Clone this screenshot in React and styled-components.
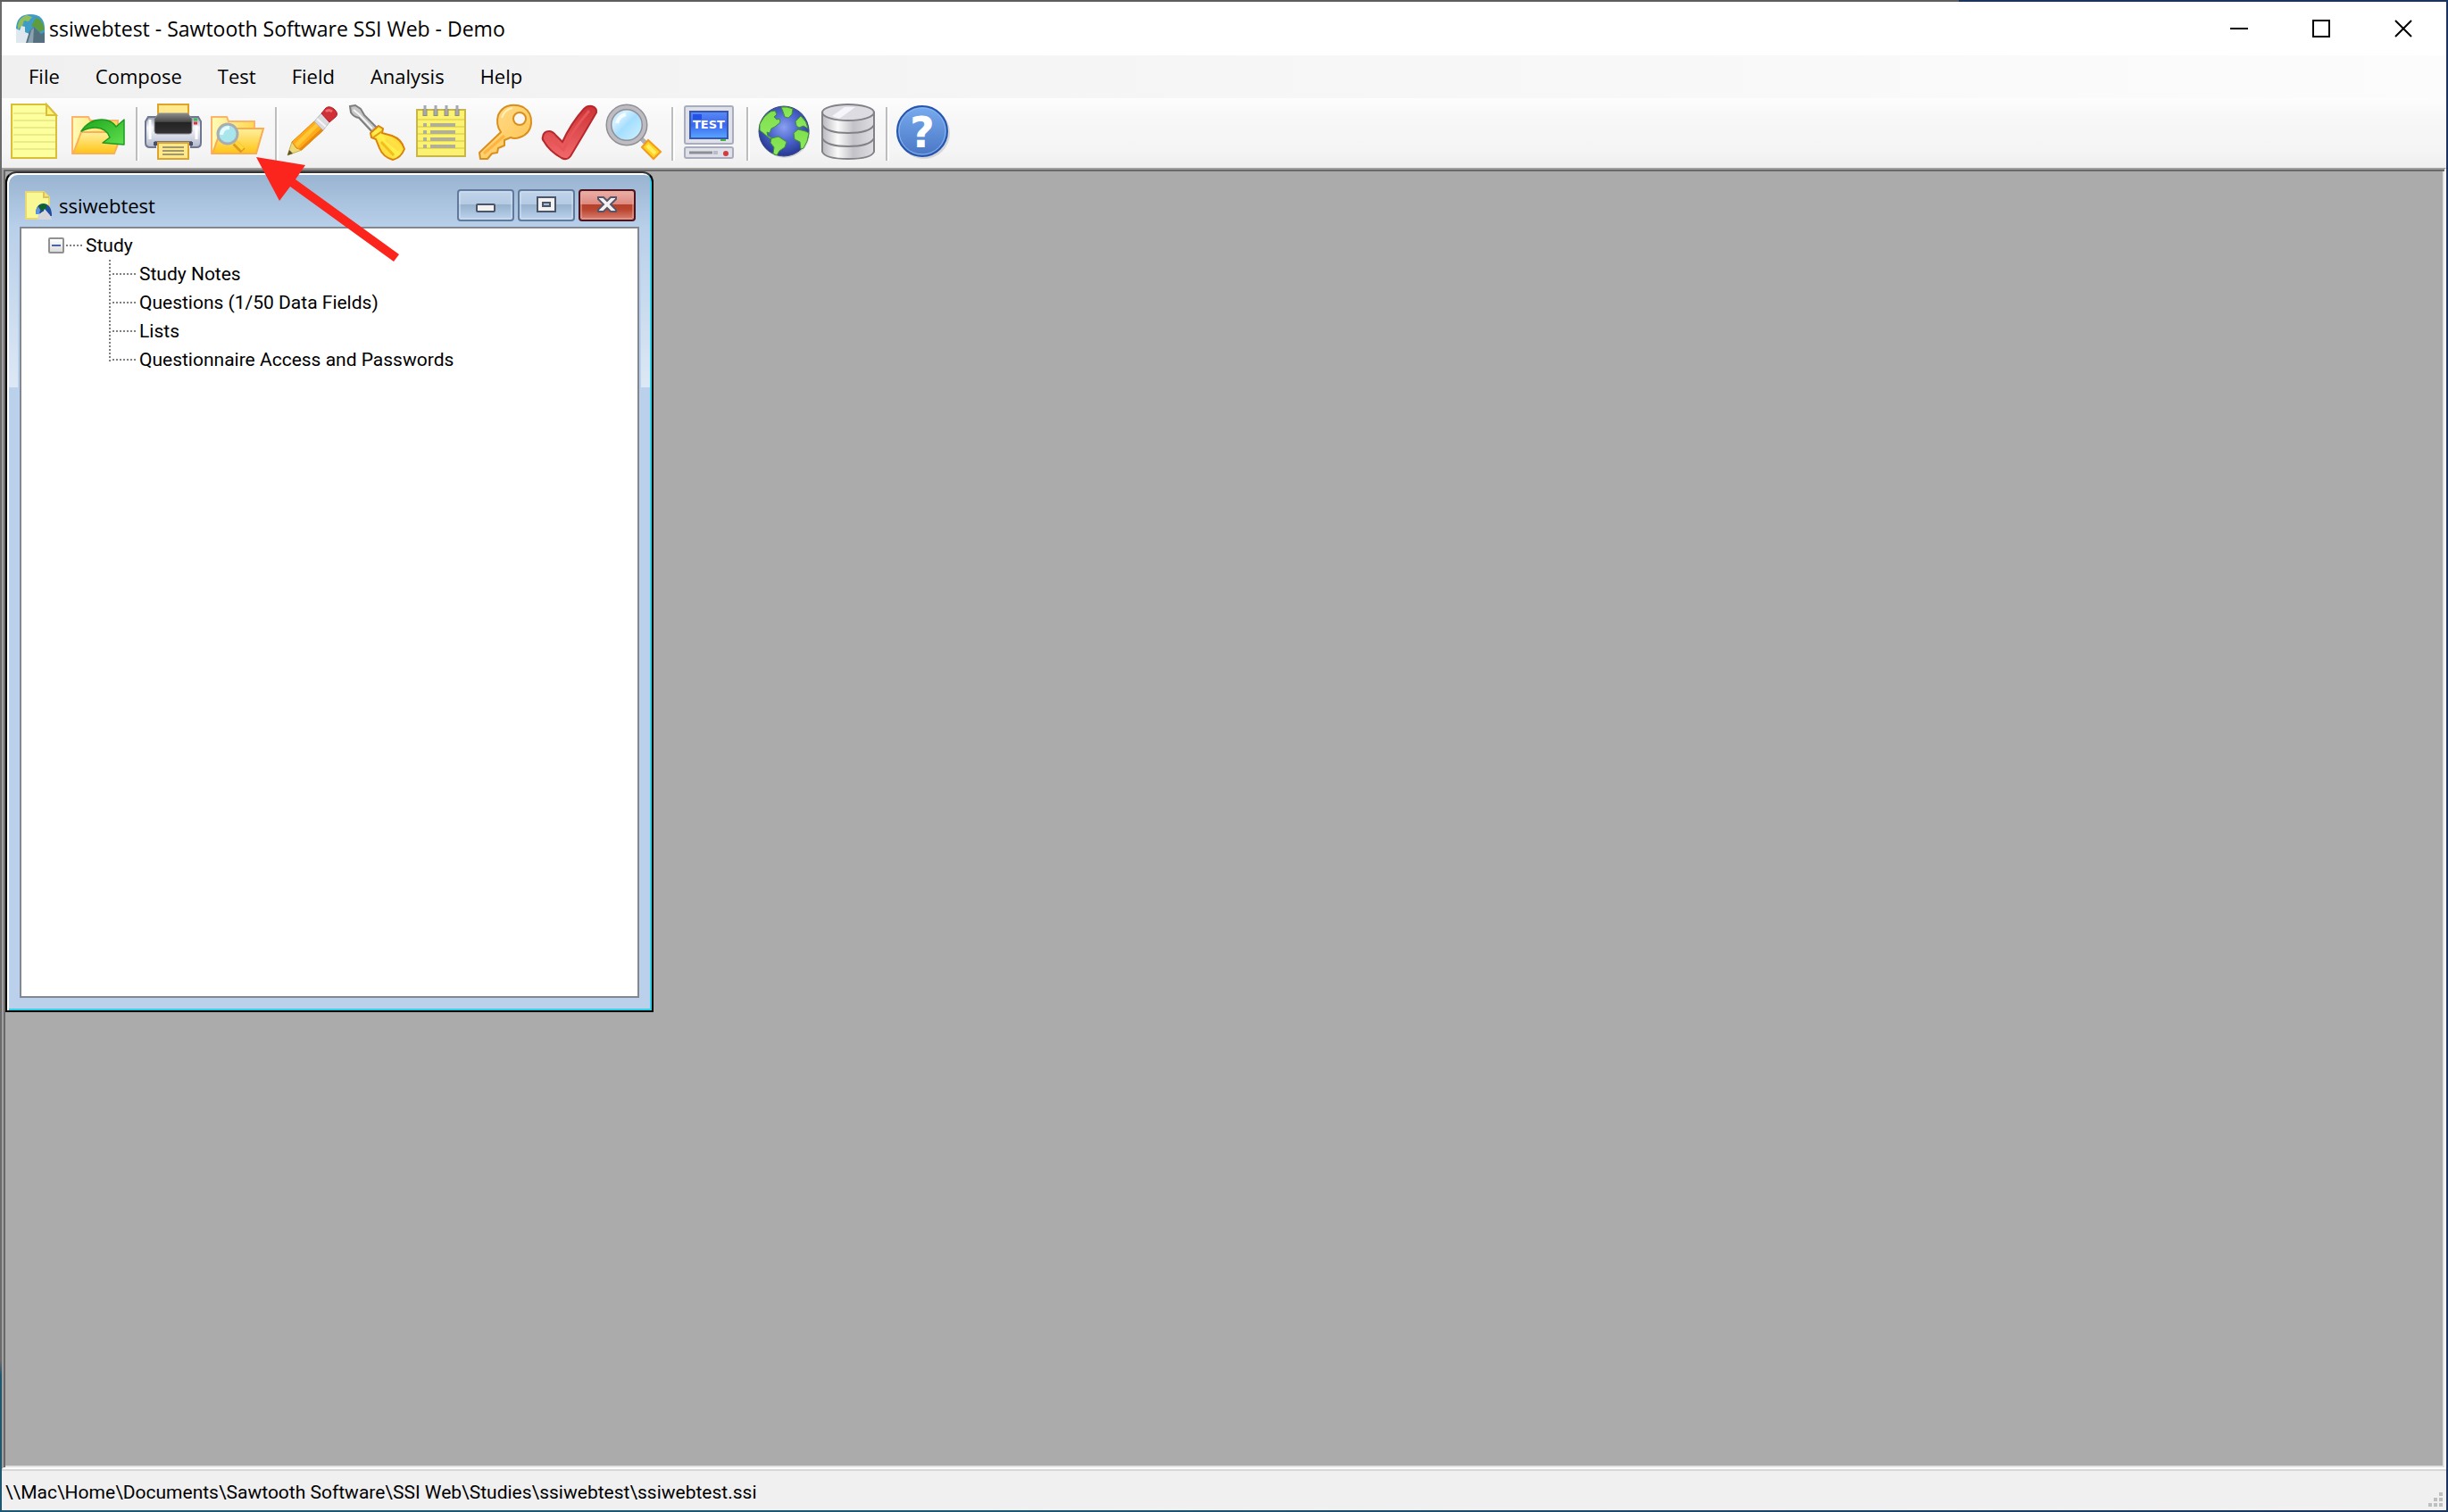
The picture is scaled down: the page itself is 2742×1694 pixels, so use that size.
import React from "react";
import styled, { createGlobalStyle, css } from "styled-components";

const Global = createGlobalStyle`
  * { box-sizing: border-box; }
  body { margin: 0; }
  button { border: 0; padding: 0; margin: 0; background: none; font: inherit; color: inherit; }
`;

/* ---------- toolbar drawings ---------- */

const Svg = ({ children, label }) => (
  <Drawing width="64" height="64" viewBox="0 0 64 64" role="img" aria-label={label}>{children}</Drawing>
);

const Gradients = () => (
  <DefsSvg width="0" height="0" aria-hidden="true">
    <defs>
      <linearGradient id="folder" x1="0" y1="0" x2="0" y2="1">
        <stop offset="0" stopColor="#fff0a0" /><stop offset="1" stopColor="#ffc415" />
      </linearGradient>
      <linearGradient id="folderBack" x1="0" y1="0" x2="1" y2="0">
        <stop offset="0" stopColor="#fffbb8" /><stop offset="1" stopColor="#ffd84c" />
      </linearGradient>
      <linearGradient id="arrow" x1="0" y1="0" x2="1" y2="1">
        <stop offset="0" stopColor="#1fa51d" /><stop offset="1" stopColor="#5fe04f" />
      </linearGradient>
      <linearGradient id="printer" x1="0" y1="0" x2="0" y2="1">
        <stop offset="0" stopColor="#9aa0b4" /><stop offset=".35" stopColor="#f4f6fb" /><stop offset="1" stopColor="#b4b9cc" />
      </linearGradient>
      <linearGradient id="dark" x1="0" y1="0" x2="0" y2="1">
        <stop offset="0" stopColor="#8c8c8c" /><stop offset=".4" stopColor="#4a4a4a" /><stop offset=".45" stopColor="#242424" /><stop offset="1" stopColor="#333" />
      </linearGradient>
      <linearGradient id="glass" x1="0" y1="0" x2="1" y2="1">
        <stop offset="0" stopColor="#a5dcff" /><stop offset=".3" stopColor="#d4f0ff" /><stop offset=".5" stopColor="#a4deff" /><stop offset="1" stopColor="#d8f6ff" />
      </linearGradient>
      <linearGradient id="screen" x1="0" y1="0" x2="0" y2="1">
        <stop offset="0" stopColor="#5a8af4" /><stop offset=".5" stopColor="#3b67f0" /><stop offset="1" stopColor="#5aa8ff" />
      </linearGradient>
      <linearGradient id="handle" x1="0" y1="1" x2="1" y2="0">
        <stop offset="0" stopColor="#ffb92a" /><stop offset=".5" stopColor="#fff04a" /><stop offset="1" stopColor="#ffae1a" />
      </linearGradient>
      <linearGradient id="key" x1="0" y1="0" x2="1" y2="1">
        <stop offset="0" stopColor="#ffdf94" /><stop offset="1" stopColor="#ffc24a" />
      </linearGradient>
      <linearGradient id="check" x1="0" y1="0" x2="0" y2="1">
        <stop offset="0" stopColor="#cc3336" /><stop offset="1" stopColor="#f2696b" />
      </linearGradient>
      <linearGradient id="metal" x1="0" y1="0" x2="1" y2="0">
        <stop offset="0" stopColor="#b8b8be" /><stop offset=".3" stopColor="#fafafa" /><stop offset=".6" stopColor="#c2c2c8" /><stop offset="1" stopColor="#dedee2" />
      </linearGradient>
      <linearGradient id="help" x1="0" y1="0" x2="0" y2="1">
        <stop offset="0" stopColor="#78abef" /><stop offset="1" stopColor="#4a76c4" />
      </linearGradient>
      <radialGradient id="ocean" cx=".5" cy=".42" r=".55">
        <stop offset="0" stopColor="#8aa0f0" /><stop offset=".5" stopColor="#4f68d0" /><stop offset="1" stopColor="#2b3c98" />
      </radialGradient>
      <linearGradient id="land" x1="0" y1="0" x2="0" y2="1">
        <stop offset="0" stopColor="#7fe04c" /><stop offset="1" stopColor="#8fe860" />
      </linearGradient>
    </defs>
  </DefsSvg>
);

const NewIcon = () => (
  <Svg label="New">
    <path d="M7 1H46L57 13V61H7Z" fill="#fdff9e" stroke="#d9bf35" strokeWidth="2" />
    {[10, 18, 26, 34, 42, 50].map((y) => (
      <path key={y} d={`M9 ${y + 1}H56`} stroke="#ecec86" strokeWidth="2" />
    ))}
    <path d="M46 1V13H57Z" fill="#fff27c" stroke="#d9bf35" strokeWidth="2" />
  </Svg>
);

const OpenIcon = () => (
  <Svg label="Open">
    <path d="M3 56V15H21L23 19H54V31L48 56Z" fill="url(#folderBack)" stroke="#fbb469" strokeWidth="2" />
    <path d="M13 32H59L50 56H4Z" fill="url(#folder)" stroke="#fbb056" strokeWidth="2" />
    <path d="M13 31C19 22 27 18 36 18C43 18 48 20 52 26L61 18V46L37 44L45 38C42 30 36 27 29 27C23 27 17 29 13 31Z" fill="url(#arrow)" stroke="#1c9a20" strokeWidth="1.5" strokeLinejoin="round" />
  </Svg>
);

const PrintIcon = () => (
  <Svg label="Print">
    <rect x="15" y="1" width="34" height="16" fill="#ffe98c" stroke="#dca42c" strokeWidth="2" />
    <path d="M4 15H60L63 20V44Q63 49 58 49H52V43H12V49H6Q1 49 1 44V20Z" fill="url(#printer)" stroke="#6f7790" strokeWidth="2" />
    <path d="M6 18V40M58 25V40" stroke="#fff" strokeWidth="3" />
    <path d="M16 11H48L53 17V31Q53 34 50 34H14Q11 34 11 31V17Z" fill="url(#dark)" stroke="#8a8a90" strokeWidth="1" />
    <path d="M10 43H54V47H10Z" fill="#4a5068" />
    <rect x="15" y="44" width="34" height="18" fill="#ffe98c" stroke="#dca42c" strokeWidth="2" />
    <path d="M20 49H44M20 53H44M20 57H44" stroke="#a09868" strokeWidth="2" />
    <path d="M55 18H59" stroke="#31c24b" strokeWidth="3" />
    <path d="M55 22H59" stroke="#e0303c" strokeWidth="3" />
  </Svg>
);

const FindFolderIcon = () => (
  <Svg label="Browse">
    <path d="M3 56V15H20L22 20H51V30L46 56Z" fill="url(#folderBack)" stroke="#fbb469" strokeWidth="2" />
    <path d="M14 28H61L53 56H4Z" fill="url(#folder)" stroke="#fbac50" strokeWidth="2" />
    <path d="M29 44L38 53" stroke="#e09a1c" strokeWidth="7" />
    <path d="M30 43L38 51" stroke="#ffd53c" strokeWidth="4" />
    <circle cx="21" cy="34" r="11" fill="#a9e6ec" stroke="#a8adb4" strokeWidth="3" />
    <path d="M14 35Q15 27 23 27" stroke="#e6fbff" strokeWidth="4" fill="none" />
  </Svg>
);

const PencilIcon = () => (
  <Svg label="Edit">
    <path d="M4 58L9 43L20 52Z" fill="#ecd97c" stroke="#c9ae48" />
    <path d="M4 58L6 52L10 56Z" fill="#5a5238" />
    <path d="M9 43L34 20L44 30L20 52L14 50Z" fill="#ffab19" stroke="#e08d12" />
    <path d="M12 45L36 22L39 25L15 49Z" fill="#ffc735" />
    <path d="M17 51L42 28L44 30L20 52Z" fill="#e88a10" />
    <path d="M34 20L42 11L51 21L44 30Z" fill="#dadade" stroke="#b4b4b8" />
    <path d="M37 17L47 26" stroke="#f6f6f6" strokeWidth="2" />
    <path d="M42 11L47 5Q51 2 56 6Q62 11 58 15L51 21Z" fill="#cf2f36" stroke="#b52229" />
    <path d="M47 9Q50 6 54 9" stroke="#ee6b70" strokeWidth="3" fill="none" />
  </Svg>
);

const ScrewdriverIcon = () => (
  <Svg label="Settings">
    <path d="M2 3L8 2L14 6Q17 11 18 13L32 27L27 32L12 16Q6 15 3 10Z" fill="#c6c6c6" stroke="#7d7d7d" strokeWidth="2" />
    <path d="M6 7L12 12L27 28" stroke="#f4f4f4" strokeWidth="2" fill="none" />
    <path d="M34 25L39 28L38 33L49 36Q60 40 63 51Q59 61 50 63Q39 60 35 50L31 40L26 38L25 33Z" fill="url(#handle)" stroke="#d9820c" strokeWidth="2" strokeLinejoin="round" />
    <path d="M28 38L38 31" stroke="#e39a14" strokeWidth="2" />
    <path d="M37 43L51 58" stroke="#f5bd1c" strokeWidth="3" />
    <path d="M42 40L57 52" stroke="#ffdd44" strokeWidth="4" />
  </Svg>
);

const NotepadIcon = () => (
  <Svg label="Notes">
    <rect x="5" y="7" width="54" height="52" fill="#fbf272" stroke="#c8b648" strokeWidth="2" />
    {[18, 26, 34, 42, 50].map((y) => (
      <path key={y} d={`M6 ${y}H58`} stroke="#ebdc58" strokeWidth="2" />
    ))}
    {[14, 26, 38, 50].map((x) => (
      <g key={x}>
        <path d={`M${x} 6V14`} stroke="#8f8f70" strokeWidth="5" />
        <path d={`M${x} 2V13`} stroke="#a8a8b0" strokeWidth="3" />
      </g>
    ))}
    {[24, 32, 40, 48].map((y) => (
      <path key={y} d={`M12 ${y}H16M20 ${y}H48`} stroke="#b2b093" strokeWidth="4" />
    ))}
  </Svg>
);

const KeyIcon = () => (
  <Svg label="Access">
    <path fillRule="evenodd" d="M34 3Q43 0 52 4Q62 10 61 22Q60 34 48 38Q42 40 38 38L31 41V47L24 50L23 55L17 56L12 62L4 62L3 55L27 32Q21 24 24 13Q28 5 34 3ZM48 10A7 7 0 1 0 48 24A7 7 0 1 0 48 10Z" fill="url(#key)" stroke="#d98f1d" strokeWidth="2" strokeLinejoin="round" />
    <path d="M8 56L31 36" stroke="#ffb340" strokeWidth="3" />
    <path d="M28 16Q31 7 40 5" stroke="#fff0bd" strokeWidth="2" fill="none" />
  </Svg>
);

const CheckIcon = () => (
  <Svg label="Check">
    <path d="M2 37Q3 31 9 31Q13 31 17 36L24 43Q33 23 48 6Q52 2 57 3Q63 5 62 10Q48 34 33 59Q29 64 23 61Q9 53 3 42Q1 40 2 37Z" fill="url(#check)" stroke="#b7282c" strokeWidth="2" />
    <path d="M6 36Q14 41 25 52Q35 30 54 8" stroke="#e85558" strokeWidth="3" fill="none" />
  </Svg>
);

const SearchIcon = () => (
  <Svg label="Search">
    <path d="M38 37L46 45" stroke="#b0b0b4" strokeWidth="5" />
    <path d="M48 41L62 54L54 62L41 49Z" fill="#ffd326" stroke="#f39a1b" strokeWidth="2" />
    <path d="M47 47L56 56" stroke="#fff05c" strokeWidth="4" />
    <circle cx="24" cy="24" r="20" fill="url(#glass)" stroke="#909094" strokeWidth="7" />
    <circle cx="24" cy="24" r="20" fill="none" stroke="#bcbcc2" strokeWidth="4" />
    <path d="M13 22Q15 14 23 12" stroke="#f4fcff" strokeWidth="4" fill="none" />
  </Svg>
);

const TestIcon = () => (
  <Svg label="Test">
    <rect x="5" y="3" width="54" height="42" rx="2" fill="#dfe1ea" stroke="#a9acbd" strokeWidth="2" />
    <rect x="11" y="9" width="42" height="30" fill="url(#screen)" stroke="#3a58a8" strokeWidth="2" />
    <rect x="14" y="12" width="10" height="6" fill="#2450e4" />
    <text x="32" y="28" textAnchor="middle" fontFamily="DejaVu Sans, sans-serif" fontWeight="700" fontSize="13" fill="#fff">TEST</text>
    <rect x="45" y="40" width="6" height="2" fill="#44b544" />
    <rect x="5" y="49" width="54" height="12" rx="2" fill="#dfe1ea" stroke="#a9acbd" strokeWidth="2" />
    <path d="M10 55H36" stroke="#8d8d92" strokeWidth="3" />
    <path d="M37 55H42" stroke="#b9bcc8" strokeWidth="4" />
    <circle cx="51" cy="56" r="3" fill="#d23a40" />
  </Svg>
);

const GlobeIcon = () => (
  <Svg label="Web">
    <circle cx="33" cy="33" r="28" fill="#d8d8dc" />
    <circle cx="32" cy="31" r="28" fill="url(#ocean)" stroke="#37467f" />
    <g fill="url(#land)" stroke="#3f8f35" strokeWidth="1">
      <path d="M29 4Q36 3 42 6L41 12L37 16L33 15L31 9Z" />
      <path d="M5 23Q9 14 17 9L22 8L24 12L21 15L24 18L27 17L28 21L22 26L18 28L16 33L13 32L14 36L19 39L16 39L10 34L5 30Z" />
      <path d="M18 39L26 37L35 43L33 49L27 53L24 58L20 56L21 49L17 44Z" />
      <path d="M45 20L51 14Q58 20 59 28L54 25L49 27L46 25Z" />
      <path d="M43 33L48 29L56 31L60 33Q59 43 54 50L51 51L50 43L44 40Z" />
    </g>
  </Svg>
);

const DatabaseIcon = () => (
  <Svg label="Data">
    <path d="M3 10V54Q6 62 32 62Q58 62 61 54V10Z" fill="url(#metal)" stroke="#828286" strokeWidth="2" />
    <ellipse cx="32" cy="10" rx="29" ry="9" fill="#dcdce2" stroke="#828286" strokeWidth="2" />
    <path d="M14 14L28 4H40L22 17Z" fill="#f6f6fa" />
    {[24, 39].map((y) => (
      <path key={y} d={`M3 ${y}Q8 ${y + 9} 32 ${y + 9}Q56 ${y + 9} 61 ${y}`} stroke="#828286" strokeWidth="2" fill="none" />
    ))}
  </Svg>
);

const HelpIcon = () => (
  <Svg label="Help">
    <circle cx="33" cy="33" r="29" fill="#d6d6d8" />
    <circle cx="31" cy="31" r="28" fill="url(#help)" stroke="#2456b0" strokeWidth="2" />
    <circle cx="31" cy="31" r="26" fill="none" stroke="#8db4ee" />
    <text x="31" y="49" textAnchor="middle" fontFamily="DejaVu Sans, sans-serif" fontWeight="700" fontSize="48" fill="#fff">?</text>
  </Svg>
);

const AppIcon = () => (
  <svg width="32" height="32" viewBox="0 0 32 32" aria-hidden="true">
    <path d="M0 32V15Q1 0 16 0Q32 0 32 16V32Z" fill="#3f9cc4" />
    <path d="M2 12Q4 3 12 1L18 3L14 8L9 7L7 13L2 17Z" fill="#93bf5a" />
    <path d="M22 4Q30 6 32 17L26 20L22 15L17 13L20 8Z" fill="#5f9c3e" />
    <path d="M0 32V16L4 18L6 13L10 14V20L15 22L17 32Z" fill="#dfe8ee" />
    <path d="M11 32L15 19L20 14L28 22L32 20V32Z" fill="#54707f" />
    <path d="M13 32L17 18L20 15L19 32Z" fill="#8ba3b0" />
  </svg>
);

const StudyIcon = () => (
  <svg width="32" height="32" viewBox="0 0 32 32" aria-hidden="true">
    <path d="M1 1H21L27 7V31H1Z" fill="#f8f895" stroke="#e8d873" strokeWidth="2" />
    <path d="M21 1V7H27" fill="#f5e37c" stroke="#dcc25a" strokeWidth="2" />
    <path d="M12 26Q12 14 21 14Q30 15 30 28L26 28L24 24L20 23L16 26Z" fill="#1d4ca0" />
    <path d="M12 26Q12 20 15 17L17 21L16 26Z" fill="#5f94e0" />
    <path d="M15 18Q17 13 24 15L24 19L19 22Z" fill="#0e6428" />
    <path d="M14 32L15 26L20 24L22 20L28 27L30 32Z" fill="#d4d6dc" />
  </svg>
);

const tools = [
  [NewIcon, OpenIcon],
  [PrintIcon, FindFolderIcon],
  [PencilIcon, ScrewdriverIcon, NotepadIcon, KeyIcon, CheckIcon, SearchIcon],
  [TestIcon],
  [GlobeIcon, DatabaseIcon],
  [HelpIcon],
];

const menus = ["File", "Compose", "Test", "Field", "Analysis", "Help"];

const nodes = [
  "Study Notes",
  "Questions (1/50 Data Fields)",
  "Lists",
  "Questionnaire Access and Passwords",
];

function StudyWindow() {
  return (
    <Child>
      <ChildBar>
        <StudyIcon />
        <ChildTitle>ssiwebtest</ChildTitle>
        <ChildButton aria-label="Minimize">
          <svg width="24" height="20" viewBox="0 0 24 20">
            <rect x="2" y="9" width="20" height="8" rx="1" fill="#f2f2f2" stroke="#4c5467" strokeWidth="2" />
          </svg>
        </ChildButton>
        <ChildButton aria-label="Maximize">
          <svg width="24" height="20" viewBox="0 0 24 20">
            <path fillRule="evenodd" d="M2 1H22V17H2ZM8 7V11H16V7Z" fill="#f2f2f2" stroke="#4c5467" strokeWidth="2" />
          </svg>
        </ChildButton>
        <ChildButton $close aria-label="Close">
          <svg width="24" height="20" viewBox="0 0 24 20">
            <path d="M2 1H8L12 5L16 1H22V3L16 9L22 15V17H16L12 13L8 17H2V15L8 9L2 3Z" fill="#f2f2f2" stroke="#5a5468" strokeWidth="2" />
          </svg>
        </ChildButton>
      </ChildBar>
      <TreePanel>
        <Root>
          <Expander aria-label="Collapse Study"><Minus /></Expander>
          <Dots $width={20} />
          Study
        </Root>
        <Branch>
          {nodes.map((name) => (
            <Leaf key={name}>
              <Dots $width={28} />
              {name}
            </Leaf>
          ))}
        </Branch>
      </TreePanel>
    </Child>
  );
}

function App() {
  return (
    <Desktop>
      <Global />
      <Gradients />
      <Frame>
        <TitleBar>
          <AppIcon />
          <Title>ssiwebtest - Sawtooth Software SSI Web - Demo</Title>
          <WindowButton aria-label="Minimize">
            <svg width="20" height="20"><path d="M0 10H20" stroke="#000" strokeWidth="2" /></svg>
          </WindowButton>
          <WindowButton aria-label="Maximize">
            <svg width="20" height="20"><rect x="1" y="1" width="18" height="18" fill="none" stroke="#000" strokeWidth="2" /></svg>
          </WindowButton>
          <WindowButton aria-label="Close">
            <svg width="20" height="20"><path d="M1 1L19 19M19 1L1 19" stroke="#000" strokeWidth="2" /></svg>
          </WindowButton>
        </TitleBar>
        <MenuBar>
          {menus.map((name) => <MenuItem key={name}>{name}</MenuItem>)}
        </MenuBar>
        <ToolBar>
          {tools.map((group, i) => (
            <React.Fragment key={i}>
              {i > 0 && <Separator />}
              {group.map((Icon, j) => <Tool key={j}><Icon /></Tool>)}
            </React.Fragment>
          ))}
        </ToolBar>
        <Workspace>
          <StudyWindow />
        </Workspace>
        <StatusBar>
          <StatusText>{"\\\\Mac\\Home\\Documents\\Sawtooth Software\\SSI Web\\Studies\\ssiwebtest\\ssiwebtest.ssi"}</StatusText>
          <Grip width="16" height="16" viewBox="0 0 16 16" fill="#bfbfbf" aria-hidden="true">
            <path d="M12 0H16V4H12ZM6 6H10V10H6ZM12 6H16V10H12ZM0 12H4V16H0ZM6 12H10V16H6ZM12 12H16V16H12Z" />
          </Grip>
        </StatusBar>
      </Frame>
      <Pointer width="180" height="130" viewBox="280 170 180 130" aria-hidden="true">
        <path d="M287 176L342 185L331 201L447 285L441 293L325 209L313 225Z" fill="#fb251d" />
      </Pointer>
    </Desktop>
  );
}

export default App;

const uiFont = css`
  font-family: "Open Sans", "Noto Sans", sans-serif;
  font-size: 22px;
  line-height: 32px;
`;

const systemFont = css`
  font-family: Roboto, "Liberation Sans", sans-serif;
  font-size: 21px;
  line-height: 32px;
`;

const Drawing = styled.svg`
  overflow: visible;
`;

const DefsSvg = styled.svg`
  position: absolute;
`;

const Desktop = styled.div`
  position: relative;
  display: flex;
  min-height: 100vh;
  padding: 2px;
  color: #000;
  background:
    linear-gradient(#1b335f, #1b335f) right / 2px 100% no-repeat,
    linear-gradient(90deg, #5e5e5e 80%, #1b335f 80%) top / 100% 2px no-repeat,
    linear-gradient(#6b6b6b 90%, #1d5770 91%) left / 2px 100% no-repeat,
    linear-gradient(90deg, #1d5770 40%, #1b335f) bottom / 100% 2px no-repeat;
`;

const Frame = styled.div`
  flex: 1;
  display: flex;
  flex-direction: column;
  background: #f0f0f0;
`;

const TitleBar = styled.header`
  ${uiFont}
  display: flex;
  align-items: center;
  height: 60px;
  padding: 0 2px 0 16px;
  background: #fff;
`;

const Title = styled.span`
  flex: 1;
  padding-left: 5px;
  font-size: 23px;
`;

const WindowButton = styled.button`
  display: flex;
  align-items: center;
  justify-content: center;
  width: 92px;
  height: 60px;
`;

const MenuBar = styled.nav`
  ${uiFont}
  display: flex;
  align-items: center;
  height: 48px;
  padding: 0 0 2px 10px;
  background: linear-gradient(90deg, #f0f0f0, #fcfcfc);
`;

const MenuItem = styled.button`
  padding: 0 20px;
`;

const ToolBar = styled.div`
  display: flex;
  height: 78px;
  padding-top: 6px;
  background: linear-gradient(#fdfdfd, #f7f7f7 30%, #f5f5f5 75%, #efefef);
`;

const Tool = styled.button`
  display: flex;
  justify-content: center;
  width: 72px;
  height: 64px;
`;

const Separator = styled.div`
  width: 4px;
  height: 60px;
  margin: 4px 2px 0 6px;
  border-left: 2px solid #bdbdbd;
  border-right: 2px solid #fff;
`;

const Workspace = styled.main`
  flex: 1;
  display: flex;
  align-items: flex-start;
  border: 2px solid;
  border-color: #a0a0a0 #fff #fff #a0a0a0;
  background: #ababab;
  box-shadow: inset 2px 2px #696969, inset -2px -2px #e3e3e3;
  padding: 2px;
`;

const Child = styled.section`
  display: flex;
  flex-direction: column;
  width: 726px;
  height: 942px;
  border: 2px solid #000;
  border-top-color: #333;
  border-radius: 12px 12px 0 0;
  padding: 2px 14px 14px;
  background:
    linear-gradient(#99b4d1, #b9d0ea) 0 2px / 100% 60px no-repeat,
    linear-gradient(#b9cfe9, #dce8f5) 2px 60px / 10px 180px no-repeat,
    linear-gradient(#b9cfe9, #dce8f5) 710px 60px / 10px 180px no-repeat,
    #bad0eb;
  box-shadow: inset 2px 2px #fff, inset -2px -2px #2fcfe8;
`;

const ChildBar = styled.header`
  ${uiFont}
  display: flex;
  align-items: center;
  gap: 4px;
  height: 58px;
  padding: 10px 4px 0 6px;
  flex: none;
`;

const ChildTitle = styled.span`
  flex: 1;
  padding-left: 2px;
`;

const ChildButton = styled.button`
  display: flex;
  align-items: center;
  justify-content: center;
  width: 64px;
  height: 36px;
  border: 2px solid ${(p) => (p.$close ? "#4a1420" : "#5f7a9c")};
  border-radius: 4px;
  background: ${(p) =>
    p.$close
      ? "linear-gradient(#eab0a8, #dd8a80 46%, #b73f28 47%, #b94630 65%, #d98074)"
      : "linear-gradient(#bfd3ea, #b6cce4 46%, #98b2ce 47%, #a2bcd8 65%, #bdd3ec)"};
  box-shadow: inset 0 0 0 2px ${(p) => (p.$close ? "#e8a69c88" : "#d3e1f088")};
`;

const TreePanel = styled.div`
  ${systemFont}
  flex: 1;
  border: 2px solid #828790;
  background: #fff;
  padding-left: 30px;
  padding-top: 3px;
`;

const Root = styled.div`
  display: flex;
  align-items: center;
  gap: 2px;
`;

const Expander = styled.button`
  display: flex;
  align-items: center;
  justify-content: center;
  width: 18px;
  height: 18px;
  border: 2px solid #919191;
  border-radius: 2px;
  background: linear-gradient(#fff, #dcdcdc);
`;

const Minus = styled.span`
  width: 10px;
  height: 2px;
  background: #4b63a7;
`;

const Dots = styled.span`
  width: ${(p) => p.$width}px;
  height: 2px;
  background: repeating-linear-gradient(90deg, #808080 0 2px, #fff 2px 4px);
`;

const Branch = styled.ul`
  list-style: none;
  margin: 0 0 0 68px;
  padding: 0;
  background: repeating-linear-gradient(#808080 0 2px, #fff 2px 4px) 0 0 / 2px 114px no-repeat;
`;

const Leaf = styled.li`
  display: flex;
  align-items: center;
  gap: 2px;
  padding-left: 4px;
`;

const StatusBar = styled.footer`
  ${systemFont}
  display: flex;
  align-items: center;
  height: 46px;
  padding: 8px 4px 4px 4px;
  border-top: 2px solid #d7d7d7;
`;

const StatusText = styled.span`
  flex: 1;
`;

const Grip = styled.svg`
  align-self: flex-end;
`;

const Pointer = styled.svg`
  position: absolute;
  left: 280px;
  top: 170px;
  pointer-events: none;
`;
